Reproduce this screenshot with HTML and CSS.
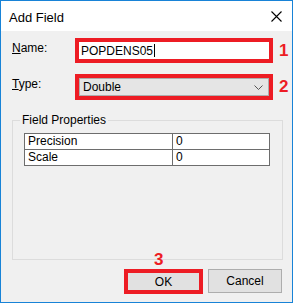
FILE: index.html
```html
<!DOCTYPE html>
<html lang="en">
<head>
    <meta charset="UTF-8">
    <meta name="viewport" content="width=device-width, initial-scale=1.0">
    <title>Add Field</title>
    <link rel="stylesheet" href="styles.css">
</head>
<body>
    <div class="dialog">
        <div class="titlebar">
            <span class="title">Add Field</span>
            <svg class="close" width="11" height="11" viewBox="0 0 11 11">
                <path d="M0.5 0.5 L10.5 10.5 M10.5 0.5 L0.5 10.5" stroke="#000" stroke-width="1.1" fill="none"/>
            </svg>
        </div>

        <div class="content">
            <!-- Name row -->
            <div class="row row-name">
                <label class="label"><u>N</u>ame:</label>
                <div class="mark">
                    <div class="textbox">POPDENS05<span class="caret"></span></div>
                </div>
                <span class="step">1</span>
            </div>

            <!-- Type row -->
            <div class="row row-type">
                <label class="label"><u>T</u>ype:</label>
                <div class="mark">
                    <div class="combo">
                        <span>Double</span>
                        <svg class="chevron" width="9" height="5" viewBox="0 0 9 5">
                            <path d="M0.5 0.5 L4.5 4.5 L8.5 0.5" stroke="#555" stroke-width="1" fill="none"/>
                        </svg>
                    </div>
                </div>
                <span class="step">2</span>
            </div>

            <!-- Field properties -->
            <fieldset class="group">
                <legend>Field Properties</legend>
                <table class="props">
                    <tr>
                        <td class="prop-name">Precision</td>
                        <td>0</td>
                    </tr>
                    <tr>
                        <td class="prop-name">Scale</td>
                        <td>0</td>
                    </tr>
                </table>
            </fieldset>

            <!-- Buttons -->
            <div class="buttons">
                <div class="ok-wrap">
                    <span class="step step-ok">3</span>
                    <div class="mark mark-ok">
                        <button class="btn btn-ok">OK</button>
                    </div>
                </div>
                <button class="btn btn-cancel">Cancel</button>
            </div>
        </div>
    </div>
</body>
</html>
```

FILE: styles.css
```css
body {
    margin: 0;
    font-family: 'Liberation Sans', Arial, sans-serif;
    font-size: 12px;
    color: #000;
    background: #fff;
}

.dialog {
    width: 293px;
    height: 303px;
    box-sizing: border-box;
    border: 1px solid #1883d7;
    display: flex;
    flex-direction: column;
    background: #f0f0f0;
}

.titlebar {
    height: 30px;
    background: #fff;
    display: flex;
    align-items: center;
    justify-content: space-between;
    padding: 0 10px 0 8px;
}

.title {
    font-size: 13px;
    padding-top: 2px;
}

.close {
    margin-top: 1px;
}

.content {
    flex: 1;
    padding: 7px 0 0 11px;
}

.row {
    display: flex;
    align-items: center;
    height: 25px;
}

.row-type {
    margin-top: 11px;
    height: 26px;
}

.label {
    width: 63px;
    font-size: 12px;
}

.row-name .label {
    margin-top: -6px;
}

.row-type .label {
    margin-top: -7px;
}

.mark {
    box-sizing: border-box;
    border: 4px solid #ed1c24;
    width: 198px;
    height: 100%;
}

.textbox {
    height: 100%;
    background: #fff;
    padding-left: 2px;
    display: flex;
    align-items: center;
    font-size: 12px;
}

.caret {
    display: inline-block;
    width: 1px;
    height: 13px;
    background: #000;
    margin-left: 1px;
}

.combo {
    box-sizing: border-box;
    height: 100%;
    background: #e5e5e5;
    border: 1px solid #adadad;
    display: flex;
    align-items: center;
    justify-content: space-between;
    padding: 0 5px 0 3px;
}

.step {
    color: #ed1c24;
    font-weight: bold;
    font-size: 17px;
    margin-left: 6px;
}

.group {
    width: 271px;
    box-sizing: border-box;
    margin: 13px 0 0 0;
    padding: 6px 0 0 11px;
    height: 147px;
    border: 1px solid #dcdcdc;
}

.group legend {
    padding: 0 2px;
    margin-left: -4px;
    font-size: 12px;
    line-height: 14px;
}

.props {
    border-collapse: collapse;
    width: 246px;
    background: #fff;
}

.props td {
    border: 1px solid #6d6d6d;
    height: 15px;
    padding: 0 0 0 3px;
    font-size: 12px;
    line-height: 15px;
}

.props .prop-name {
    width: 144px;
}

.buttons {
    display: flex;
    align-items: flex-start;
    margin-top: 9px;
    padding-left: 112px;
}

.ok-wrap {
    position: relative;
}

.step-ok {
    position: absolute;
    left: 30px;
    top: -19px;
    margin: 0;
}

.mark-ok {
    width: 79px;
    height: 25px;
}

.btn {
    font-family: 'Liberation Sans', Arial, sans-serif;
    font-size: 12px;
    background: #e1e1e1;
    color: #000;
    padding: 0;
}

.btn-ok {
    width: 100%;
    height: 100%;
    border: 0;
}

.btn-cancel {
    margin-left: 5px;
    width: 74px;
    height: 24px;
    border: 1px solid #adadad;
}
```
